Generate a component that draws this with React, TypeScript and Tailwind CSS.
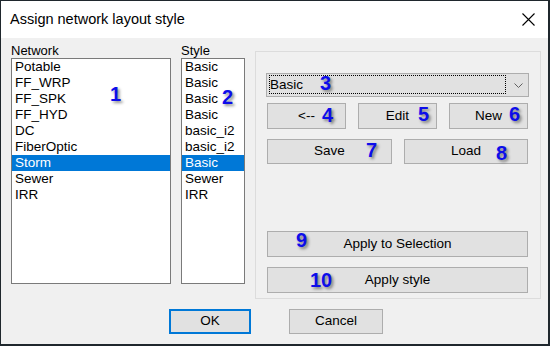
import React from "react";

const networks = ["Potable", "FF_WRP", "FF_SPK", "FF_HYD", "DC", "FiberOptic", "Storm", "Sewer", "IRR"];
const styles = ["Basic", "Basic", "Basic", "Basic", "basic_i2", "basic_i2", "Basic", "Sewer", "IRR"];

function Btn({ label, className }: { label: string; className: string }) {
  return (
    <div className={`flex items-center justify-center bg-[#e1e1e1] border border-[#adadad] text-[13.5px] text-black ${className}`}>
      {label}
    </div>
  );
}

function ListBox({ items, width }: { items: string[]; width: string }) {
  return (
    <div className={`${width} h-[226px] bg-white border border-[#7a7a7a] flex flex-col`}>
      {items.map((t, i) => (
        <div
          key={i}
          className={`h-[16px] leading-[16px] pl-[3px] text-[13.5px] ${i === 6 ? "bg-[#0078d7] text-white" : "text-black"}`}
        >
          {t}
        </div>
      ))}
    </div>
  );
}

const nums: { n: string; l: number; t: number }[] = [
  { n: "1", l: 110, t: 84 },
  { n: "2", l: 222, t: 87 },
  { n: "3", l: 320, t: 73 },
  { n: "4", l: 322, t: 105 },
  { n: "5", l: 418, t: 104 },
  { n: "6", l: 509, t: 104 },
  { n: "7", l: 366, t: 140 },
  { n: "8", l: 496, t: 143 },
  { n: "9", l: 296, t: 230 },
  { n: "10", l: 310, t: 270 },
];

export default function App() {
  return (
    <div
      className="w-[550px] h-[346px] bg-[#1f272d] relative overflow-hidden"
      style={{ fontFamily: '"Liberation Sans", Arial, sans-serif' }}
    >
      <div className="absolute left-[1px] top-[1px] w-[547px] h-[343px] flex flex-col bg-[#f0f0f0]">
        {/* Title bar */}
        <div className="h-[37px] bg-white flex items-center justify-between pl-[9px] pr-[13px] shrink-0">
          <span className="text-[14.5px] text-black">Assign network layout style</span>
          <svg width="13" height="13" viewBox="0 0 13 13">
            <path d="M0.5 0.5 L12.5 12.5 M12.5 0.5 L0.5 12.5" stroke="#000" strokeWidth="1.1" />
          </svg>
        </div>
        {/* Body */}
        <div className="flex flex-col">
          <div className="flex items-start pl-[10px] h-[261px]">
            <div className="flex flex-col w-[160px] pt-[5px]">
              <div className="h-[15px] leading-[15px] text-[13px] text-black">Network</div>
              <ListBox items={networks} width="w-[160px]" />
            </div>
            <div className="flex flex-col w-[64px] ml-[10px] pt-[5px]">
              <div className="h-[15px] leading-[15px] text-[13px] text-black">Style</div>
              <ListBox items={styles} width="w-[64px]" />
            </div>
            <div className="ml-[10px] mt-[13px] w-[286px] h-[248px] border border-[#dcdcdc] flex flex-col pl-[10px] pr-[11px] pt-[21px] pb-[5px]">
              <div className="h-[24px] bg-[#e1e1e1] border border-[#adadad] flex items-center relative">
                <div className="absolute left-[2px] top-[1px] w-[237px] h-[19px] border border-dotted border-[#000]" />
                <span className="pl-[3px] text-[13.5px] text-black">Basic</span>
                <svg className="absolute right-[5px] top-[9px]" width="9" height="5" viewBox="0 0 9 5">
                  <path d="M0.5 0.5 L4.5 4.5 L8.5 0.5" stroke="#606060" fill="none" strokeWidth="1" />
                </svg>
              </div>
              <div className="flex gap-[12px] mt-[6px] pl-[1px]">
                <Btn label="<--" className="w-[79px] h-[26px]" />
                <Btn label="Edit" className="w-[79px] h-[26px]" />
                <Btn label="New" className="w-[79px] h-[26px]" />
              </div>
              <div className="flex gap-[12px] mt-[10px] pl-[1px]">
                <Btn label="Save" className="w-[125px] h-[25px]" />
                <Btn label="Load" className="w-[124px] h-[25px]" />
              </div>
              <div className="flex-1" />
              <div className="pl-[1px] flex flex-col gap-[10px]">
                <Btn label="Apply to Selection" className="w-[261px] h-[26px]" />
                <Btn label="Apply style" className="w-[261px] h-[26px]" />
              </div>
            </div>
          </div>
          <div className="flex pl-[168px] mt-[10px] gap-[38px]">
            <div className="w-[82px] h-[25px] bg-[#e1e1e1] border-2 border-[#0078d7] flex items-center justify-center text-[13.5px] text-black">
              OK
            </div>
            <Btn label="Cancel" className="w-[94px] h-[25px]" />
          </div>
        </div>
      </div>
      {nums.map((x) => (
        <div
          key={x.n}
          className="absolute text-[20px] leading-[20px] font-bold text-[#0d0dea]"
          style={{ left: x.l, top: x.t, textShadow: "2px 2px 3px rgba(0,0,0,0.45)" }}
        >
          {x.n}
        </div>
      ))}
    </div>
  );
}
